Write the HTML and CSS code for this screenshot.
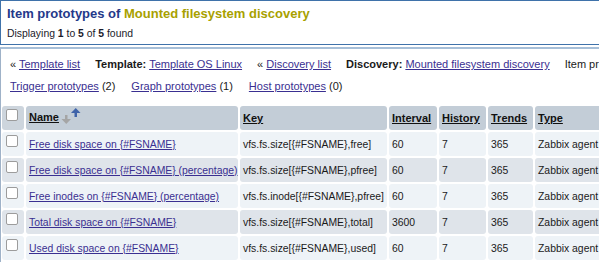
FILE: index.html
```html
<!DOCTYPE html>
<html>
<head>
<meta charset="utf-8">
<link rel="stylesheet" href="styles.css">
</head>
<body>
<div class="page">
  <div class="header">
    <div class="title">Item prototypes of <span class="host">Mounted filesystem discovery</span></div>
    <div class="count">Displaying <b>1</b> to <b>5</b> of <b>5</b> found</div>
  </div>
  <div class="content">
    <div class="nav">
      <span class="item">« <a href="#">Template list</a></span>
      <span class="item"><b>Template:</b> <a href="#">Template OS Linux</a></span>
      <span class="item">« <a href="#">Discovery list</a></span>
      <span class="item"><b>Discovery:</b> <a href="#">Mounted filesystem discovery</a></span>
      <span class="item">Item prototypes (5)</span>
    </div>
    <div class="nav nav-sub">
      <span class="item"><a href="#">Trigger prototypes</a> (2)</span>
      <span class="item"><a href="#">Graph prototypes</a> (1)</span>
      <span class="item"><a href="#">Host prototypes</a> (0)</span>
    </div>
    <table class="grid">
      <thead>
        <tr>
          <th class="cb w-cb"><span class="box"></span></th>
          <th class="w-name"><u>Name</u><svg class="sort" width="22" height="20" viewBox="0 0 22 20"><rect x="4" y="9" width="2.5" height="5" fill="#a5a5a5"/><polygon points="0.5,13 10,13 5.25,18" fill="#a5a5a5"/><polygon points="10,7 19.5,7 14.75,2" fill="#3f63a9"/><rect x="13.5" y="6" width="2.5" height="5" fill="#3f63a9"/></svg></th>
          <th class="w-key"><u>Key</u></th>
          <th class="w-int"><u>Interval</u></th>
          <th class="w-hist"><u>History</u></th>
          <th class="w-tr"><u>Trends</u></th>
          <th class="w-type"><u>Type</u></th>
          <th class="w-app">Applications</th>
          <th class="w-st"><u>Status</u></th>
        </tr>
      </thead>
      <tbody>
        <tr class="odd">
          <td class="cb"><span class="box"></span></td>
          <td><a href="#">Free disk space on {#FSNAME}</a></td>
          <td>vfs.fs.size[{#FSNAME},free]</td>
          <td>60</td><td>7</td><td>365</td><td>Zabbix agent</td><td>Filesystems</td><td>Enabled</td>
        </tr>
        <tr class="even">
          <td class="cb"><span class="box"></span></td>
          <td><a href="#">Free disk space on {#FSNAME} (percentage)</a></td>
          <td>vfs.fs.size[{#FSNAME},pfree]</td>
          <td>60</td><td>7</td><td>365</td><td>Zabbix agent</td><td>Filesystems</td><td>Enabled</td>
        </tr>
        <tr class="odd">
          <td class="cb"><span class="box"></span></td>
          <td><a href="#">Free inodes on {#FSNAME} (percentage)</a></td>
          <td>vfs.fs.inode[{#FSNAME},pfree]</td>
          <td>60</td><td>7</td><td>365</td><td>Zabbix agent</td><td>Filesystems</td><td>Enabled</td>
        </tr>
        <tr class="even">
          <td class="cb"><span class="box"></span></td>
          <td><a href="#">Total disk space on {#FSNAME}</a></td>
          <td>vfs.fs.size[{#FSNAME},total]</td>
          <td>3600</td><td>7</td><td>365</td><td>Zabbix agent</td><td>Filesystems</td><td>Enabled</td>
        </tr>
        <tr class="odd">
          <td class="cb"><span class="box"></span></td>
          <td><a href="#">Used disk space on {#FSNAME}</a></td>
          <td>vfs.fs.size[{#FSNAME},used]</td>
          <td>60</td><td>7</td><td>365</td><td>Zabbix agent</td><td>Filesystems</td><td>Enabled</td>
        </tr>
      </tbody>
    </table>
  </div>
</div>
</body>
</html>
```
FILE: styles.css
```css
html, body {
  margin: 0;
  padding: 0;
  overflow: hidden;
  background: #ffffff;
}
body {
  font-family: "Liberation Sans", Arial, sans-serif;
  font-size: 11px;
  color: #1a1a1a;
}
.page {
  width: 1000px;
}
.header {
  border: 1px solid #3f72aa;
  border-right: none;
  padding: 5px 6px 0 6px;
  box-sizing: content-box;
  height: 38px;
}
.title {
  font-weight: bold;
  font-size: 13px;
  line-height: 15px;
  color: #24398a;
}
.host {
  color: #a8a100;
}
.count {
  margin-top: 7px;
  font-size: 10.4px;
  line-height: 12px;
  color: #1a1a2a;
}
.content {
  margin-top: 2px;
  border-top: 2px solid #a7bfd8;
  border-left: 1px solid #9fb2c8;
  padding: 8px 0 0 0;
  height: 300px;
}
.nav {
  padding-left: 9px;
  line-height: 14px;
  white-space: nowrap;
  display: flex;
  gap: 15px;
  margin-bottom: 8px;
}
.nav-sub {
  gap: 16px;
  margin-bottom: 11px;
}
a {
  color: #3a2f91;
  text-decoration: underline;
}
.grid {
  table-layout: fixed;
  border-collapse: separate;
  border-spacing: 2px;
  width: 831px;
  margin-left: -1px;
}
.grid th, .grid td {
  box-sizing: border-box;
  height: 24px;
  padding: 0 3px;
  text-align: left;
  vertical-align: middle;
  border-radius: 3px;
  white-space: nowrap;
  overflow: hidden;
}
.grid td {
  font-size: 10.4px;
}
.grid th {
  background: #c3cdd7;
  color: #111;
  font-weight: bold;
}
.grid th.cb {
  background: #cdd5dd;
}
.grid tr.odd td {
  background: #eef3f7;
}
.grid tr.even td {
  background: #dfe4ea;
}
.grid .cb {
  vertical-align: top;
  padding: 3px 0 0 4px;
}
.box {
  display: block;
  width: 10px;
  height: 10px;
  border: 1px solid #9c9c9c;
  border-radius: 2px;
  background: #ffffff;
}
.sort {
  vertical-align: middle;
  margin-left: 2px;
  margin-top: -4px;
}
.w-cb { width: 22px; }
.w-name { width: 212px; }
.w-key { width: 147px; }
.w-int { width: 48px; }
.w-hist { width: 47px; }
.w-tr { width: 45px; }
.w-type { width: 110px; }
.w-app { width: 120px; }
.w-st { width: 60px; }
```
